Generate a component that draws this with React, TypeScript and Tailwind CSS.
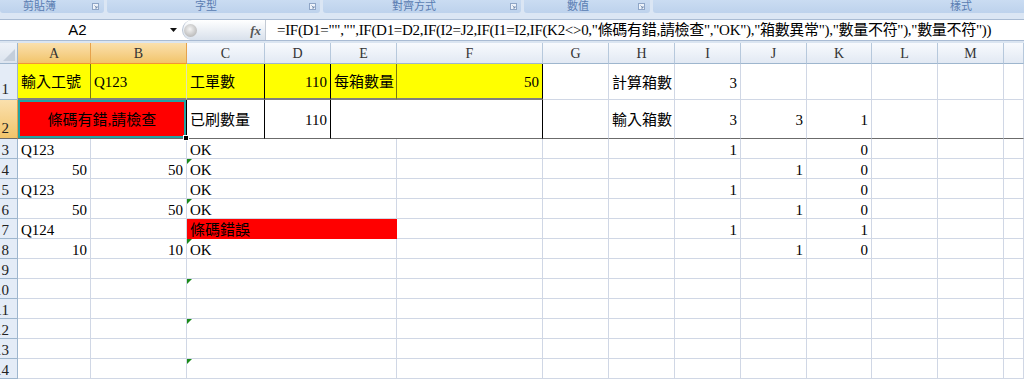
import type { ReactNode } from "react";

const serif = "font-['Liberation_Serif','Noto_Sans_CJK_TC',serif]";
const grid = "border-r-[#d0d7e5] border-b-[#d0d7e5]";

type CellProps = { children?: ReactNode; className?: string };

function Cell({ children, className = "" }: CellProps) {
  return (
    <div className={`relative flex min-w-0 whitespace-nowrap border-r border-b ${className}`}>
      {children}
    </div>
  );
}

// small green "number stored as text" marker
function Mark() {
  return (
    <span className="absolute left-0 top-0 h-0 w-0 border-t-[5px] border-r-[5px] border-t-[#1a8a1a] border-r-transparent" />
  );
}

function Launcher() {
  return (
    <svg width="7" height="7" viewBox="0 0 7 7" className="mt-[3px]">
      <rect x="0.5" y="0.5" width="6" height="6" fill="#eef3fa" stroke="#8ea5c6" />
      <path d="M2.5 2.5 L5 5 M5 3 V5 H3" stroke="#6d86aa" strokeWidth="0.8" fill="none" />
    </svg>
  );
}

type BodyRow = {
  n: number;
  a?: string;
  aNum?: boolean;
  b?: string;
  c?: string;
  red?: boolean;
  mark?: boolean;
  i?: string;
  j?: string;
  k?: string;
};

const rows: BodyRow[] = [
  { n: 3, a: "Q123", c: "OK", i: "1", k: "0" },
  { n: 4, a: "50", aNum: true, b: "50", c: "OK", mark: true, j: "1", k: "0" },
  { n: 5, a: "Q123", c: "OK", i: "1", k: "0" },
  { n: 6, a: "50", aNum: true, b: "50", c: "OK", mark: true, j: "1", k: "0" },
  { n: 7, a: "Q124", c: "條碼錯誤", red: true, i: "1", k: "1" },
  { n: 8, a: "10", aNum: true, b: "10", c: "OK", mark: true, j: "1", k: "0" },
  { n: 9 },
  { n: 10, mark: true },
  { n: 11 },
  { n: 12, mark: true },
  { n: 13 },
  { n: 14, mark: true },
];

const columns = [
  { name: "A", on: true },
  { name: "B", on: true },
  { name: "C" },
  { name: "D" },
  { name: "E" },
  { name: "F" },
  { name: "G" },
  { name: "H" },
  { name: "I" },
  { name: "J" },
  { name: "K" },
  { name: "L" },
  { name: "M" },
  { name: "" },
];

const formula =
  '=IF(D1="","",IF(D1=D2,IF(I2=J2,IF(I1=I2,IF(K2<>0,"條碼有錯,請檢查","OK"),"箱數異常"),"數量不符"),"數量不符"))';

function Ribbon() {
  const label = "text-[11px] leading-[11px] text-[#5a7db2] font-['Noto_Sans_CJK_TC',sans-serif]";
  const group = "flex h-[13px] rounded-b-[3px] bg-gradient-to-b from-[#cadcf2] to-[#bdd2ec]";
  return (
    <div className="flex h-[19px] bg-[#dbe6f4]">
      <div className={`${group} w-[104px] pr-[5px]`}>
        <span className={`${label} pl-[23px]`}>剪貼簿</span>
        <span className="ml-auto">
          <Launcher />
        </span>
      </div>
      <div className={`${group} ml-[3px] w-[213px] pr-[4px]`}>
        <span className={`${label} pl-[88px]`}>字型</span>
        <span className="ml-auto">
          <Launcher />
        </span>
      </div>
      <div className={`${group} ml-[3px] w-[198px] pr-[4px]`}>
        <span className={`${label} pl-[69px]`}>對齊方式</span>
        <span className="ml-auto">
          <Launcher />
        </span>
      </div>
      <div className={`${group} ml-[3px] w-[126px] pr-[5px]`}>
        <span className={`${label} pl-[43px]`}>數值</span>
        <span className="ml-auto">
          <Launcher />
        </span>
      </div>
      <div className={`${group} ml-[3px] flex-1 rounded-br-none`}>
        <span className={`${label} pl-[297px]`}>樣式</span>
      </div>
    </div>
  );
}

function FormulaBar() {
  return (
    <div className="flex h-[22px] border-y border-[#a9bbd3] bg-white">
      <div className="flex w-[182px] items-center">
        <div className="w-[155px] text-center font-['Liberation_Sans',sans-serif] text-[15px] leading-[18px] text-black">
          A2
        </div>
        <svg width="8" height="5" viewBox="0 0 8 5" className="ml-[15px]">
          <path d="M0 0 H7 L3.5 4 Z" fill="#111" />
        </svg>
      </div>
      <div className="flex w-[83px] items-center rounded-l-full border-l border-[#b9c4d3] bg-gradient-to-b from-white to-[#d9e1ec]">
        <span className="ml-[1px] h-[13px] w-[13px] rounded-full bg-[radial-gradient(circle_at_45%_40%,#f4f4f4,#a6a6a6)]" />
        <span className="ml-auto mr-[4px] font-['Liberation_Serif',serif] text-[13px] font-bold italic leading-none text-[#555]">
          fx
        </span>
      </div>
      <div className="w-px bg-[#c3cad4]" />
      <div
        className={`flex items-center pl-[11px] ${serif} whitespace-nowrap text-[15px] leading-[18px] tracking-[-0.3px] text-black`}
      >
        {formula}
      </div>
    </div>
  );
}

function Sheet() {
  const head = "border-r border-b items-end justify-center pb-[1px] text-[14px] leading-[16px] text-[#333]";
  const rowHead =
    "flex items-end justify-end overflow-hidden border-r border-b border-r-[#9eb6ce] border-b-[#9eb6ce] bg-[#e4ecf7] pr-[8px] text-[15px] leading-[15px] text-[#222]";
  const top = "items-center px-[3px] pt-[2px] text-[15px] leading-[18px]";
  const frozen = "border-b-[#6b6b6b]";
  const body = `${grid} items-end px-[3px] text-[15px] leading-[15px]`;

  return (
    <div
      className={`grid w-[1024px] grid-cols-[18px_73px_96px_78px_66px_66px_146px_66px_66px_66px_66px_65px_66px_66px_20px] grid-rows-[21px_36px_39px_repeat(12,20px)] ${serif} text-black`}
    >
      {/* corner */}
      <div className="relative border-r border-b border-r-[#9eb6ce] border-b-[#9eb6ce] bg-gradient-to-b from-[#eef2f8] to-[#dce4ef]">
        <svg width="12" height="12" viewBox="0 0 12 12" className="absolute bottom-[2px] right-[2px]">
          <path d="M12 0 V12 H0 Z" fill="#c4cedb" />
        </svg>
      </div>
      {columns.map((c, idx) =>
        c.on ? (
          <div
            key={idx}
            className={`flex ${head} border-r-[#e6a24c] border-b-[#f29536] bg-gradient-to-b from-[#fae0ad] to-[#f2c469]`}
          >
            {c.name}
          </div>
        ) : (
          <div
            key={idx}
            className={`flex ${head} border-r-[#b6c8dc] border-b-[#9eb6ce] bg-gradient-to-b from-[#f8fafd] to-[#e2e9f3]`}
          >
            {c.name}
          </div>
        ),
      )}

      {/* row 1 */}
      <div className={`${rowHead} pb-[2px]`}>1</div>
      <Cell className={`${top} border-r-[#7b7b10] border-b-2 border-b-[#808080] bg-[#ffff00]`}>輸入工號</Cell>
      <Cell className={`${top} border-r-[#e3e3b0] border-b-2 border-b-[#808080] bg-[#ffff00]`}>Q123</Cell>
      <Cell className={`${top} border-r-black border-b-2 border-b-[#808080] bg-[#ffff00]`}>工單數</Cell>
      <Cell className={`${top} justify-end border-r-black border-b-2 border-b-[#808080] bg-[#ffff00]`}>110</Cell>
      <Cell className={`${top} border-r-[#7b7b10] border-b-2 border-b-[#808080] bg-[#ffff00]`}>每箱數量</Cell>
      <Cell className={`${top} justify-end border-r-black border-b-2 border-b-[#808080] bg-[#ffff00]`}>50</Cell>
      <Cell className={`${top} ${grid}`} />
      <Cell className={`${top} ${grid}`}>計算箱數</Cell>
      <Cell className={`${top} ${grid} justify-end`}>3</Cell>
      <Cell className={`${top} ${grid}`} />
      <Cell className={`${top} ${grid}`} />
      <Cell className={`${top} ${grid}`} />
      <Cell className={`${top} ${grid}`} />
      <Cell className={`${top} ${grid}`} />

      {/* row 2 */}
      <div className="flex items-end justify-end overflow-hidden border-r border-b border-r-[#e6a24c] border-b-[#6b6b6b] bg-gradient-to-b from-[#fae0ad] to-[#f2c469] pr-[8px] pb-[2px] text-[15px] leading-[15px] text-[#222]">
        2
      </div>
      <Cell className={`${top} col-span-2 justify-center border-r-black ${frozen} bg-[#ff0000]`}>
        條碼有錯,請檢查
        <span className="pointer-events-none absolute inset-0 border-2 border-[#23a3a3]" />
        <span className="absolute -bottom-[3px] -right-[3px] z-10 h-[6px] w-[6px] border border-white bg-black" />
      </Cell>
      <Cell className={`${top} border-r-black ${frozen}`}>已刷數量</Cell>
      <Cell className={`${top} justify-end border-r-black ${frozen}`}>110</Cell>
      <Cell className={`${top} col-span-2 border-r-black ${frozen}`} />
      <Cell className={`${top} border-r-[#d0d7e5] ${frozen}`} />
      <Cell className={`${top} border-r-[#d0d7e5] ${frozen}`}>輸入箱數</Cell>
      <Cell className={`${top} justify-end border-r-[#d0d7e5] ${frozen}`}>3</Cell>
      <Cell className={`${top} justify-end border-r-[#d0d7e5] ${frozen}`}>3</Cell>
      <Cell className={`${top} justify-end border-r-[#d0d7e5] ${frozen}`}>1</Cell>
      <Cell className={`${top} border-r-[#d0d7e5] ${frozen}`} />
      <Cell className={`${top} border-r-[#d0d7e5] ${frozen}`} />
      <Cell className={`${top} border-r-[#d0d7e5] ${frozen}`} />

      {/* rows 3-14 */}
      {rows.map((r) => (
        <div key={r.n} className="contents">
          <div className={rowHead}>{r.n}</div>
          <Cell className={`${body} ${r.aNum ? "justify-end" : ""}`}>{r.a}</Cell>
          <Cell className={`${body} justify-end`}>{r.b}</Cell>
          {r.red ? (
            <Cell className="col-span-3 items-end border-r-[#ff0000] border-b-[#ff0000] bg-[#ff0000] px-[3px] text-[15px] leading-[15px]">
              {r.c}
            </Cell>
          ) : (
            <Cell className={`${body} col-span-3`}>
              {r.mark && <Mark />}
              {r.c}
            </Cell>
          )}
          <Cell className={body} />
          <Cell className={body} />
          <Cell className={body} />
          <Cell className={`${body} justify-end`}>{r.i}</Cell>
          <Cell className={`${body} justify-end`}>{r.j}</Cell>
          <Cell className={`${body} justify-end`}>{r.k}</Cell>
          <Cell className={body} />
          <Cell className={body} />
          <Cell className={body} />
        </div>
      ))}
    </div>
  );
}

export default function App() {
  return (
    <div className="h-[381px] w-[1024px] overflow-hidden bg-white">
      <Ribbon />
      <FormulaBar />
      <div className="h-[2px] bg-[#dbe5f1]" />
      <Sheet />
    </div>
  );
}
